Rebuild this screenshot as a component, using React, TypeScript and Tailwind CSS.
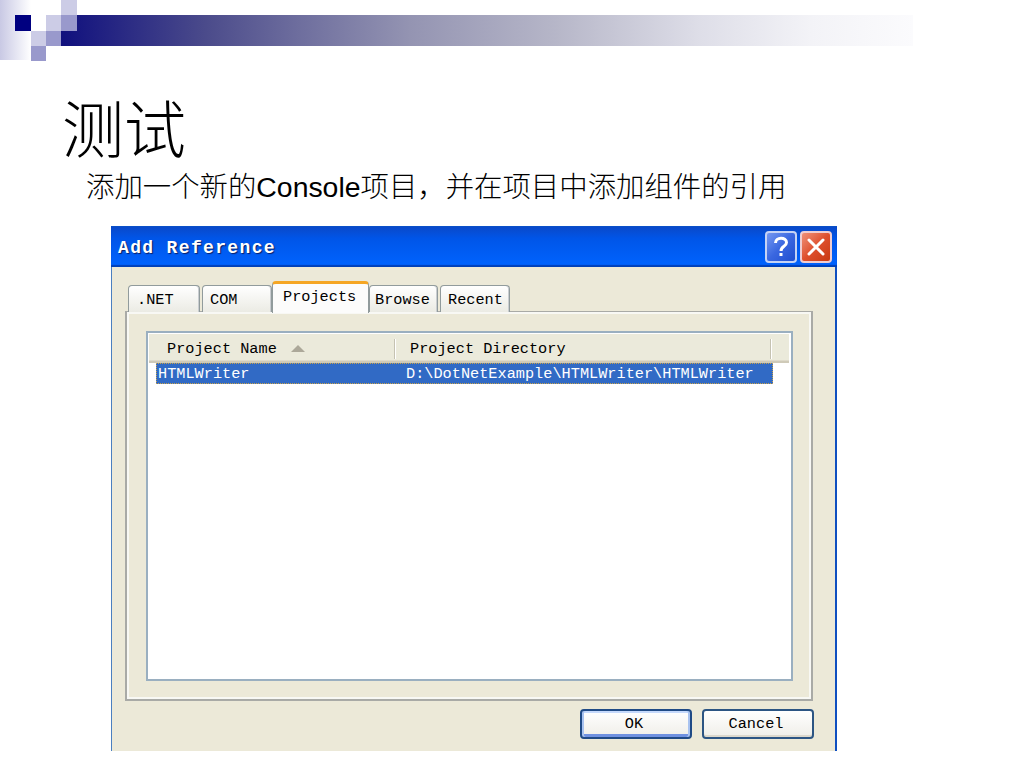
import { clsx } from "clsx";

const squares = [
  "col-start-2 row-start-2 bg-[#000080]",
  "col-start-5 row-start-1 bg-[#cccce6]",
  "col-start-4 row-start-2 bg-[#cccce6]",
  "col-start-5 row-start-2 bg-[#9999cc]",
  "col-start-3 row-start-3 bg-[#cccce6]",
  "col-start-4 row-start-3 bg-[#9999cc]",
  "col-start-3 row-start-4 bg-[#9999cc]",
];

const tabs = [
  { label: ".NET", box: "w-[72px] mr-[2px] pl-[8px]" },
  { label: "COM", box: "w-[70px] pl-[7px]" },
  { label: "Projects", box: "w-[97px] pl-[10px]", active: true },
  { label: "Browse", box: "w-[69px] mr-[2px] pl-[5px]" },
  { label: "Recent", box: "w-[70px] pl-[7px]" },
];

function SlideBanner() {
  return (
    <div className="relative h-[61px] pt-[15px]">
      <div className="ml-[61px] h-[31px] w-[852px] bg-[linear-gradient(to_right,#10107e_0%,#4b4b8b_17%,#6e6e9e_28%,#9494b2_41%,#b6b6c8_58%,#dedee8_75%,#f3f3f7_88%,#fbfbfd_100%)]" />
      <div className="absolute left-0 top-0 h-[60px] w-[31px] bg-linear-to-r from-[#c9c9e4] to-white" />
      <div className="absolute left-0 top-0 grid grid-cols-[15px_16px_15px_15px_16px] grid-rows-[15px_16px_15px_15px]">
        {squares.map((s) => (
          <div key={s} className={s} />
        ))}
      </div>
    </div>
  );
}

function TitleBar() {
  return (
    <div className="flex h-[41px] items-center bg-linear-to-b from-[#0a48c6] via-[#0055e8] via-30% to-[#0062fc] to-90% pl-[7px] pr-[5px] shadow-[inset_0_-2px_1px_#0040b8,inset_0_1px_0_#0a50c8]">
      <span className="flex-1 pt-[2px] text-[18px] font-bold tracking-[1.35px] text-white [text-shadow:1px_1px_1px_#0a1f66]">
        Add Reference
      </span>
      <button className="mr-[3px] flex h-[32px] w-[32px] items-center justify-center rounded-[4px] border-2 border-[#c5d3f5] bg-linear-to-br from-[#7597f0] via-[#3a67e0] to-[#1f4fd0]">
        <svg width="18" height="22" viewBox="0 0 18 22" fill="none" stroke="white" strokeWidth="3">
          <path d="M3.5 7C3.5 0.8 14.5 0.8 14.5 6.5C14.5 10.5 9 10 9 15" />
          <path d="M9 17V20" />
        </svg>
      </button>
      <button className="flex h-[32px] w-[32px] items-center justify-center rounded-[4px] border-2 border-[#f0cdd0] bg-linear-to-br from-[#ee9078] via-[#de4f2c] to-[#c83a12]">
        <svg width="18" height="18" viewBox="0 0 18 18" stroke="white" strokeWidth="3" strokeLinecap="round">
          <path d="M2 2L16 16M16 2L2 16" />
        </svg>
      </button>
    </div>
  );
}

function TabStrip() {
  return (
    <div className="relative z-10 flex h-[31px] items-end pl-[16px]">
      {tabs.map((tab) => (
        <div
          key={tab.label}
          className={clsx(
            "border-[#919b9c] text-black",
            tab.box,
            tab.active
              ? "-mb-px h-[32px] rounded-t-[4px] border-x border-t-[3px] border-t-[#f5a623] bg-[#fcfcfb] pt-[3px]"
              : "h-[27px] rounded-t-[4px] border border-b-0 bg-linear-to-b from-white to-[#ebebe4] pt-[4px] shadow-[inset_-1px_0_0_#c9cdd0]"
          )}
        >
          {tab.label}
        </div>
      ))}
    </div>
  );
}

function ProjectList() {
  return (
    <div className="h-[350px] w-[647px] border-2 border-[#9aafc0] bg-white p-px">
      <div className="flex h-[29px] w-[640px] items-center border-b-2 border-[#cfcab8] bg-[#ebeadb] pt-[2px] shadow-[inset_0_-1px_0_#dedaca]">
        <div className="flex h-[20px] w-[246px] items-center border-r border-[#c5c2b2] pl-[18px]">
          <span>Project Name</span>
          <svg className="ml-[14px]" width="14" height="7" viewBox="0 0 14 7">
            <path d="M0 7L7 0L14 7Z" fill="#aca899" />
          </svg>
        </div>
        <div className="flex h-[20px] w-[376px] items-center border-l border-r border-l-white border-r-[#c5c2b2] pl-[14px]">
          Project Directory
        </div>
        <div className="h-[20px] w-px bg-white" />
      </div>
      <div className="ml-[7px] flex h-[21px] w-[617px] items-center border border-dotted border-[#c9a24a] bg-[#316ac5] text-white">
        <span className="w-[249px] pl-px">HTMLWriter</span>
        <span>D:\DotNetExample\HTMLWriter\HTMLWriter</span>
      </div>
    </div>
  );
}

function AddReferenceDialog() {
  return (
    <div className="ml-[111px] h-[525px] w-[726px] bg-[#ece9d8] font-['Liberation_Mono',monospace] text-[15.25px] leading-[20px] text-black">
      <TitleBar />
      <div className="h-[484px] border-l border-r-2 border-l-[#4b7fc0] border-r-[#0f4fc0] pt-[14px]">
        <TabStrip />
        <div className="-mt-px ml-[13px] h-[390px] w-[688px] border-2 border-t-[1px] border-[#a9aaa6] pl-[19px] pt-[19px] shadow-[inset_0_0_0_2px_#f8f8f4]">
          <ProjectList />
        </div>
        <div className="flex justify-end gap-[10px] pr-[21px] pt-[8px]">
          <button className="h-[30px] w-[112px] rounded-[4px] border-2 border-[#1f4a86] bg-linear-to-b from-white to-[#efeee8] pr-[4px] shadow-[inset_2px_0_0_#a9c3f0,inset_-2px_0_0_#a9c3f0,inset_0_2px_0_#c5d9fb,inset_0_-3px_0_#6f91e0]">
            OK
          </button>
          <button className="h-[30px] w-[112px] rounded-[4px] border-2 border-[#2c5583] bg-linear-to-b from-white to-[#efeee8] pr-[4px] shadow-[inset_0_-2px_0_#dcd8cc]">
            Cancel
          </button>
        </div>
      </div>
    </div>
  );
}

export default function App() {
  return (
    <div className="h-[768px] w-[1024px] overflow-hidden bg-white text-black">
      <SlideBanner />
      <h1 className="ml-[62px] mt-[36px] h-[70px] font-['Liberation_Sans','Noto_Sans_CJK_SC',sans-serif] text-[62px] font-light leading-[70px]">
        测试
      </h1>
      <p className="ml-[86px] h-[59px] whitespace-nowrap pt-px font-['Liberation_Sans','Noto_Sans_CJK_SC',sans-serif] text-[28.4px] font-light leading-[38px]">
        添加一个新的Console项目，并在项目中添加组件的引用
      </p>
      <AddReferenceDialog />
    </div>
  );
}
